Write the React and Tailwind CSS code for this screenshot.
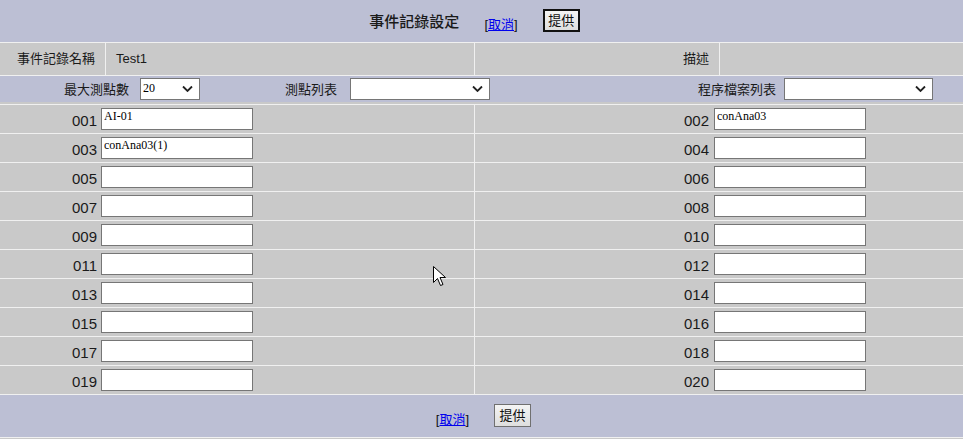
import React from 'react';

const rows = [
  ['001', 'AI-01', '002', 'conAna03'],
  ['003', 'conAna03(1)', '004', ''],
  ['005', '', '006', ''],
  ['007', '', '008', ''],
  ['009', '', '010', ''],
  ['011', '', '012', ''],
  ['013', '', '014', ''],
  ['015', '', '016', ''],
  ['017', '', '018', ''],
  ['019', '', '020', ''],
];

const Chevron = () => (
  <svg className="pointer-events-none absolute right-[7px] top-1/2 -translate-y-1/2" width="11" height="7" viewBox="0 0 11 7">
    <path d="M1 1 L5.5 5.5 L10 1" fill="none" stroke="#222" strokeWidth="1.8" />
  </svg>
);

const Select = ({ value, className }) => (
  <div className={`relative h-[22px] ${className}`}>
    <select
      defaultValue={value}
      className="h-full w-full appearance-none border border-[#767676] bg-white pl-[2px] pb-[5px] font-['Liberation_Serif',serif] text-[12px] text-black outline-none"
    >
      <option value={value}>{value}</option>
    </select>
    <Chevron />
  </div>
);

const Field = ({ value }) => (
  <input
    type="text"
    defaultValue={value}
    className="h-[22px] w-[152px] border border-[#767676] bg-white pl-[2px] pb-[5px] font-['Liberation_Serif',serif] text-[12px] text-black outline-none"
  />
);

const Button = ({ focused }) => (
  <button
    type="button"
    className={`h-[23px] w-[37px] bg-gradient-to-b from-[#f4f4f4] to-[#dedede] text-[13px] leading-none text-[#111] ${
      focused ? 'border-2 border-[#111]' : 'border border-[#707070]'
    }`}
  >
    提供
  </button>
);

const CancelLink = () => (
  <span className="text-[13px] text-[#111]">
    [<a href="#" className="text-[#0000ee] underline">取消</a>]
  </span>
);

export default function App() {
  return (
    <div className="relative flex h-[439px] w-[963px] flex-col gap-[1px] bg-[#f0f0f0] font-['Liberation_Sans','Noto_Sans_CJK_TC',sans-serif] text-[#1a1a1a]">
      {/* header */}
      <div className="flex h-[42px] items-center justify-center gap-[25px] bg-[#bcbfd4] pr-[14px]">
        <span className="pt-[2px] text-[15px] font-medium">事件記錄設定</span>
        <span className="pt-[5px]"><CancelLink /></span>
        <span className="pb-[2px]"><Button focused /></span>
      </div>

      {/* name row */}
      <div className="flex h-[32px] gap-[1px] text-[13px]">
        <div className="flex w-[105px] items-center justify-center bg-[#c9c9c9] pl-[7px]">事件記錄名稱</div>
        <div className="flex w-[368px] items-center bg-[#c9c9c9] pl-[10px]">Test1</div>
        <div className="flex w-[244px] items-center justify-end bg-[#c9c9c9] pr-[10px]">描述</div>
        <div className="flex-1 bg-[#c9c9c9]" />
      </div>

      {/* select row */}
      <div className="flex h-[28px] items-start bg-[#c9c9c9]">
        <div className="flex h-[26px] w-full items-center bg-[#bcbfd4] text-[13px]">
          <div className="w-[129px] pt-[2px] text-right">最大測點數</div>
          <Select value="20" className="ml-[11px] w-[60px]" />
          <div className="w-[137px] pt-[2px] text-right">測點列表</div>
          <Select value="" className="ml-[13px] w-[140px]" />
          <div className="flex-1 pt-[2px] text-right">程序檔案列表</div>
          <Select value="" className="ml-[8px] w-[149px]" />
          <div className="w-[30px]" />
        </div>
      </div>

      {/* data rows */}
      {rows.map(([a, av, b, bv]) => (
        <div key={a} className="flex h-[28px] gap-[1px] text-[15px]">
          <div className="flex w-[474px] items-center bg-[#c9c9c9]">
            <span className="w-[97px] pt-[5px] text-right">{a}</span>
            <span className="ml-[4px] flex"><Field value={av} /></span>
          </div>
          <div className="flex flex-1 items-center bg-[#c9c9c9]">
            <span className="w-[234px] pt-[5px] text-right">{b}</span>
            <span className="ml-[5px] flex"><Field value={bv} /></span>
          </div>
        </div>
      ))}

      {/* footer */}
      <div className="flex h-[42px] items-center justify-center gap-[25px] bg-[#bcbfd4] pl-[4px]">
        <span className="pt-[6px]"><CancelLink /></span>
        <span className="pb-[3px]"><Button /></span>
      </div>
      <div className="flex-1 bg-[#c9c9c9]" />

      {/* mouse pointer */}
      <svg className="absolute left-[433px] top-[266px]" width="14" height="21" viewBox="0 0 14 21">
        <path d="M0.5 0.5 L0.5 16.5 L4.5 12.5 L7.5 19.5 L10 18.5 L7 11.5 L12.5 11.5 Z" fill="#fff" stroke="#000" strokeWidth="1" />
      </svg>
    </div>
  );
}
